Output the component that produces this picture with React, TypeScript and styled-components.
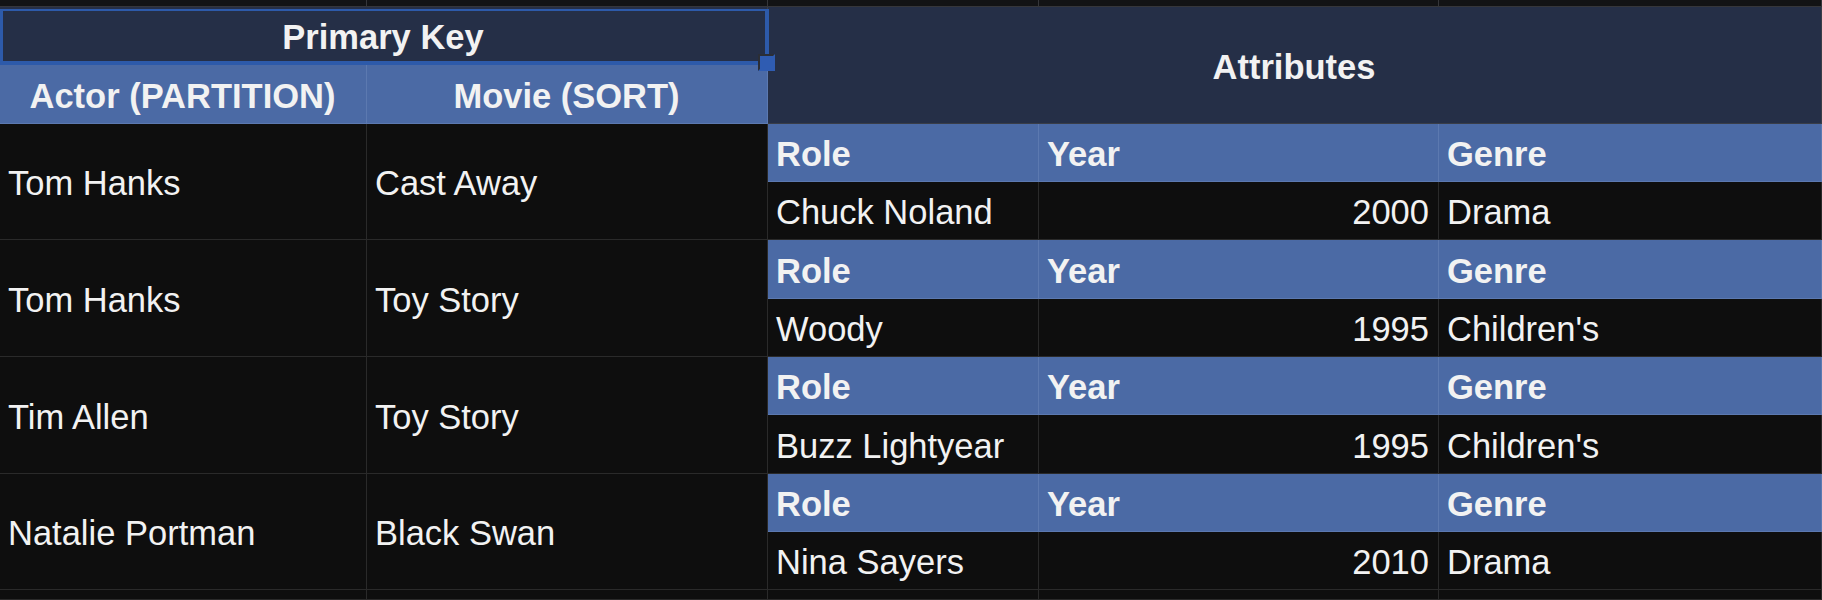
import React from 'react';
import styled, { createGlobalStyle } from 'styled-components';

const GlobalStyle = createGlobalStyle`
  html, body { margin: 0; padding: 0; background: #0e0e0e; }
  body {
    font-family: "Liberation Sans", Arial, Helvetica, sans-serif;
    overflow: hidden;
  }
`;

type Tone = 'strip' | 'dark' | 'navy' | 'blue';

const tones: Record<Tone, { bg: string; line: string }> = {
  strip: { bg: '#121315', line: '#35363a' },
  dark: { bg: '#0e0e0e', line: '#2a2a2a' },
  navy: { bg: '#252f47', line: '#3a3e48' },
  blue: { bg: '#4b6aa5', line: '#5c79b0' },
};

const Sheet = styled.div`
  display: grid;
  width: 1822px;
  height: 600px;
  overflow: hidden;
  grid-template-columns: 367px 401px 271px 400px 383px;
  grid-template-rows: 7px 58px 59px 58px 58px 59px 58px 58px 59px 58px 58px 10px;
`;

const Cell = styled.div<{
  $tone: Tone;
  $align?: 'left' | 'center' | 'right';
  $bold?: boolean;
  $col: string;
  $row: string;
}>`
  grid-column: ${(p) => p.$col};
  grid-row: ${(p) => p.$row};
  display: flex;
  align-items: center;
  justify-content: ${(p) =>
    p.$align === 'center' ? 'center' : p.$align === 'right' ? 'flex-end' : 'flex-start'};
  padding: 4px 9px 0 8px;
  min-width: 0;
  background: ${(p) => tones[p.$tone].bg};
  border-right: 1px solid ${(p) => tones[p.$tone].line};
  border-bottom: 1px solid ${(p) => tones[p.$tone].line};
  color: #f2f2f2;
  font-size: 34.5px;
  font-weight: ${(p) => (p.$bold ? 700 : 400)};
  white-space: nowrap;
  line-height: 1;
`;

const SelectedCell = styled(Cell)`
  position: relative;
  overflow: visible;
`;

const SelectionFrame = styled.div`
  position: absolute;
  top: 2px;
  left: 0;
  right: -2px;
  bottom: -1px;
  border-style: solid;
  border-color: #2d5aaa;
  border-width: 2px 4px 4px 3px;
  pointer-events: none;
  z-index: 2;
`;

const FillHandle = styled.div`
  position: absolute;
  right: -8px;
  bottom: -7px;
  width: 13px;
  height: 13px;
  background: #2f5cb2;
  border: 2px solid #2b2e36;
  border-right-color: transparent;
  border-bottom-color: transparent;
  z-index: 3;
`;

type Item = { actor: string; movie: string; role: string; year: string; genre: string };

const items: Item[] = [
  { actor: 'Tom Hanks', movie: 'Cast Away', role: 'Chuck Noland', year: '2000', genre: 'Drama' },
  { actor: 'Tom Hanks', movie: 'Toy Story', role: 'Woody', year: '1995', genre: "Children's" },
  { actor: 'Tim Allen', movie: 'Toy Story', role: 'Buzz Lightyear', year: '1995', genre: "Children's" },
  { actor: 'Natalie Portman', movie: 'Black Swan', role: 'Nina Sayers', year: '2010', genre: 'Drama' },
];

const cols = ['1', '2', '3', '4', '5'];

export default function App() {
  return (
    <>
      <GlobalStyle />
      <Sheet>
        {cols.map((c) => (
          <Cell key={`top-${c}`} $tone="strip" $col={c} $row="1" />
        ))}

        <SelectedCell $tone="navy" $bold $align="center" $col="1 / 3" $row="2">
          Primary Key
          <SelectionFrame />
          <FillHandle />
        </SelectedCell>
        <Cell $tone="navy" $bold $align="center" $col="3 / 6" $row="2 / 4">
          Attributes
        </Cell>
        <Cell $tone="blue" $bold $align="center" $col="1" $row="3">
          Actor (PARTITION)
        </Cell>
        <Cell $tone="blue" $bold $align="center" $col="2" $row="3">
          Movie (SORT)
        </Cell>

        {items.map((it, i) => {
          const h = 4 + i * 2;
          const v = h + 1;
          return (
            <React.Fragment key={i}>
              <Cell $tone="dark" $col="1" $row={`${h} / ${h + 2}`}>
                {it.actor}
              </Cell>
              <Cell $tone="dark" $col="2" $row={`${h} / ${h + 2}`}>
                {it.movie}
              </Cell>
              <Cell $tone="blue" $bold $col="3" $row={`${h}`}>
                Role
              </Cell>
              <Cell $tone="blue" $bold $col="4" $row={`${h}`}>
                Year
              </Cell>
              <Cell $tone="blue" $bold $col="5" $row={`${h}`}>
                Genre
              </Cell>
              <Cell $tone="dark" $col="3" $row={`${v}`}>
                {it.role}
              </Cell>
              <Cell $tone="dark" $align="right" $col="4" $row={`${v}`}>
                {it.year}
              </Cell>
              <Cell $tone="dark" $col="5" $row={`${v}`}>
                {it.genre}
              </Cell>
            </React.Fragment>
          );
        })}

        {cols.map((c) => (
          <Cell key={`bottom-${c}`} $tone="dark" $col={c} $row="12" />
        ))}
      </Sheet>
    </>
  );
}
